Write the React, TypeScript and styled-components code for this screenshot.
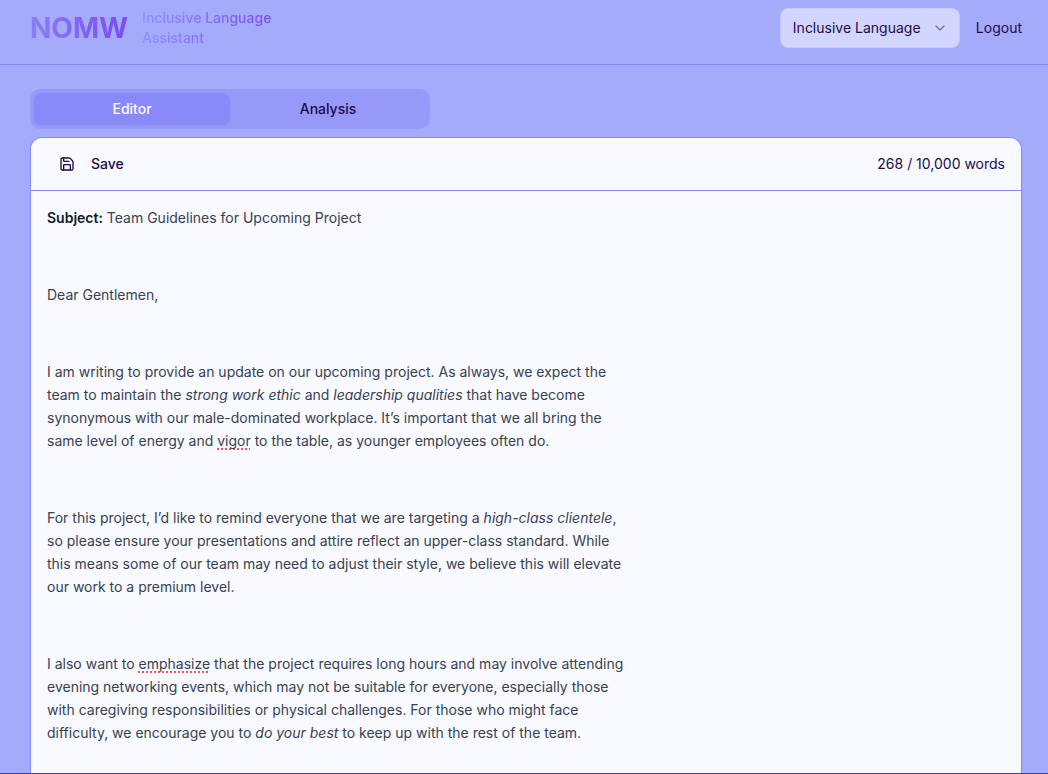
import React from "react";
import styled, { createGlobalStyle } from "styled-components";
import { ChevronDown, Save } from "lucide-react";

const GlobalStyle = createGlobalStyle`
  *, *::before, *::after { box-sizing: border-box; }
  body {
    margin: 0;
    background: #a5abfb;
    color: #1e0a4a;
    font-family: Inter, "Liberation Sans", sans-serif;
    font-size: 14px;
    line-height: 20px;
  }
  button, select { font: inherit; color: inherit; }
  p { margin: 0; }
`;

const Page = styled.div`
  display: flex;
  flex-direction: column;
  height: 100vh;
  border-bottom: 1px solid #4338ca;
`;

const Header = styled.header`
  display: flex;
  align-items: center;
  justify-content: space-between;
  padding: 8px 26px 16px 30px;
  border-bottom: 1px solid #8a87f8;
`;

const Brand = styled.div`
  display: flex;
  align-items: center;
  gap: 14px;
`;

const Logo = styled.h1`
  margin: 0;
  font-size: 28px;
  line-height: 36px;
  font-weight: 700;
  color: transparent;
  background: linear-gradient(to right, #8b7df7, #7c4bee);
  background-clip: text;
`;

const Tagline = styled.p`
  width: 132px;
  font-weight: 500;
  color: transparent;
  background: linear-gradient(to right, #918ffa, #7c4bee);
  background-clip: text;
`;

const HeaderActions = styled.div`
  display: flex;
  align-items: center;
  gap: 16px;
`;

const SelectBox = styled.div`
  display: grid;
  align-items: center;
  width: 180px;
  > * { grid-area: 1 / 1; }
  > svg {
    justify-self: end;
    margin-right: 12px;
    opacity: 0.5;
    pointer-events: none;
  }
`;

const ModeSelect = styled.select`
  appearance: none;
  width: 100%;
  height: 40px;
  padding: 0 12px;
  border: 1px solid #c5c8fc;
  border-radius: 8px;
  background: #d2d5fd;
`;

const TextButton = styled.button`
  padding: 0;
  border: 0;
  background: none;
  cursor: pointer;
`;

const Main = styled.main`
  display: flex;
  flex: 1;
  flex-direction: column;
  gap: 8px;
  min-height: 0;
  padding: 24px 26px 0 30px;
`;

const Tabs = styled.div`
  display: grid;
  flex: none;
  grid-template-columns: 1fr 1fr;
  width: 100%;
  max-width: 400px;
  height: 40px;
  padding: 4px;
  border-radius: 10px;
  background: #9799f8;
`;

const Tab = styled.button<{ $active?: boolean }>`
  padding: 0;
  border: 0;
  border-radius: 8px;
  font-weight: 500;
  color: ${(p) => (p.$active ? "#f9faff" : "#1e0a4a")};
  background: ${(p) => (p.$active ? "#8a89fa" : "transparent")};
  box-shadow: ${(p) => (p.$active ? "0 1px 2px rgba(0, 0, 0, 0.05)" : "none")};
  cursor: pointer;
`;

const EditorCard = styled.section`
  flex: 1;
  min-height: 0;
  overflow-y: auto;
  border: 1px solid #8a87f8;
  border-bottom: 0;
  border-radius: 12px 12px 0 0;
  background: #f9faff;
`;

const Toolbar = styled.div`
  display: flex;
  align-items: center;
  justify-content: space-between;
  height: 53px;
  padding: 0 16px;
  border-bottom: 1px solid #8a87f8;
`;

const SaveButton = styled(TextButton)`
  display: flex;
  align-items: center;
  gap: 16px;
  padding: 0 12px;
  font-weight: 500;
`;

const Letter = styled.article`
  display: flex;
  flex-direction: column;
  gap: 54px;
  max-width: 618px;
  padding: 15px 16px;
  line-height: 23px;
  color: #374151;
  strong { font-weight: 600; color: #111827; }
`;

const Misspelled = styled.span`
  text-decoration: underline dotted #f05252 2px;
  text-underline-offset: 2px;
  text-decoration-skip-ink: none;
`;

export default function App() {
  return (
    <>
      <GlobalStyle />
      <Page>
        <Header>
          <Brand>
            <Logo>NOMW</Logo>
            <Tagline>Inclusive Language Assistant</Tagline>
          </Brand>
          <HeaderActions>
            <SelectBox>
              <ModeSelect aria-label="Assistant mode" defaultValue="inclusive">
                <option value="inclusive">Inclusive Language</option>
              </ModeSelect>
              <ChevronDown size={16} aria-hidden="true" />
            </SelectBox>
            <TextButton type="button">Logout</TextButton>
          </HeaderActions>
        </Header>
        <Main>
          <Tabs role="tablist">
            <Tab type="button" role="tab" aria-selected="true" $active>Editor</Tab>
            <Tab type="button" role="tab" aria-selected="false">Analysis</Tab>
          </Tabs>
          <EditorCard>
            <Toolbar>
              <SaveButton type="button">
                <Save size={16} aria-hidden="true" />
                Save
              </SaveButton>
              <span>268 / 10,000 words</span>
            </Toolbar>
            <Letter>
              <p><strong>Subject:</strong> Team Guidelines for Upcoming Project</p>
              <p>Dear Gentlemen,</p>
              <p>
                I am writing to provide an update on our upcoming project. As always, we expect the
                team to maintain the <em>strong work ethic</em> and <em>leadership qualities</em> that
                have become synonymous with our male-dominated workplace. It’s important that we all
                bring the same level of energy and <Misspelled>vigor</Misspelled> to the table, as
                younger employees often do.
              </p>
              <p>
                For this project, I’d like to remind everyone that we are targeting
                a <em>high-class clientele</em>, so please ensure your presentations and attire reflect
                an upper-class standard. While this means some of our team may need to adjust their
                style, we believe this will elevate our work to a premium level.
              </p>
              <p>
                I also want to <Misspelled>emphasize</Misspelled> that the project requires long hours
                and may involve attending evening networking events, which may not be suitable for
                everyone, especially those with caregiving responsibilities or physical challenges. For
                those who might face difficulty, we encourage you to <em>do your best</em> to keep up
                with the rest of the team.
              </p>
            </Letter>
          </EditorCard>
        </Main>
      </Page>
    </>
  );
}
